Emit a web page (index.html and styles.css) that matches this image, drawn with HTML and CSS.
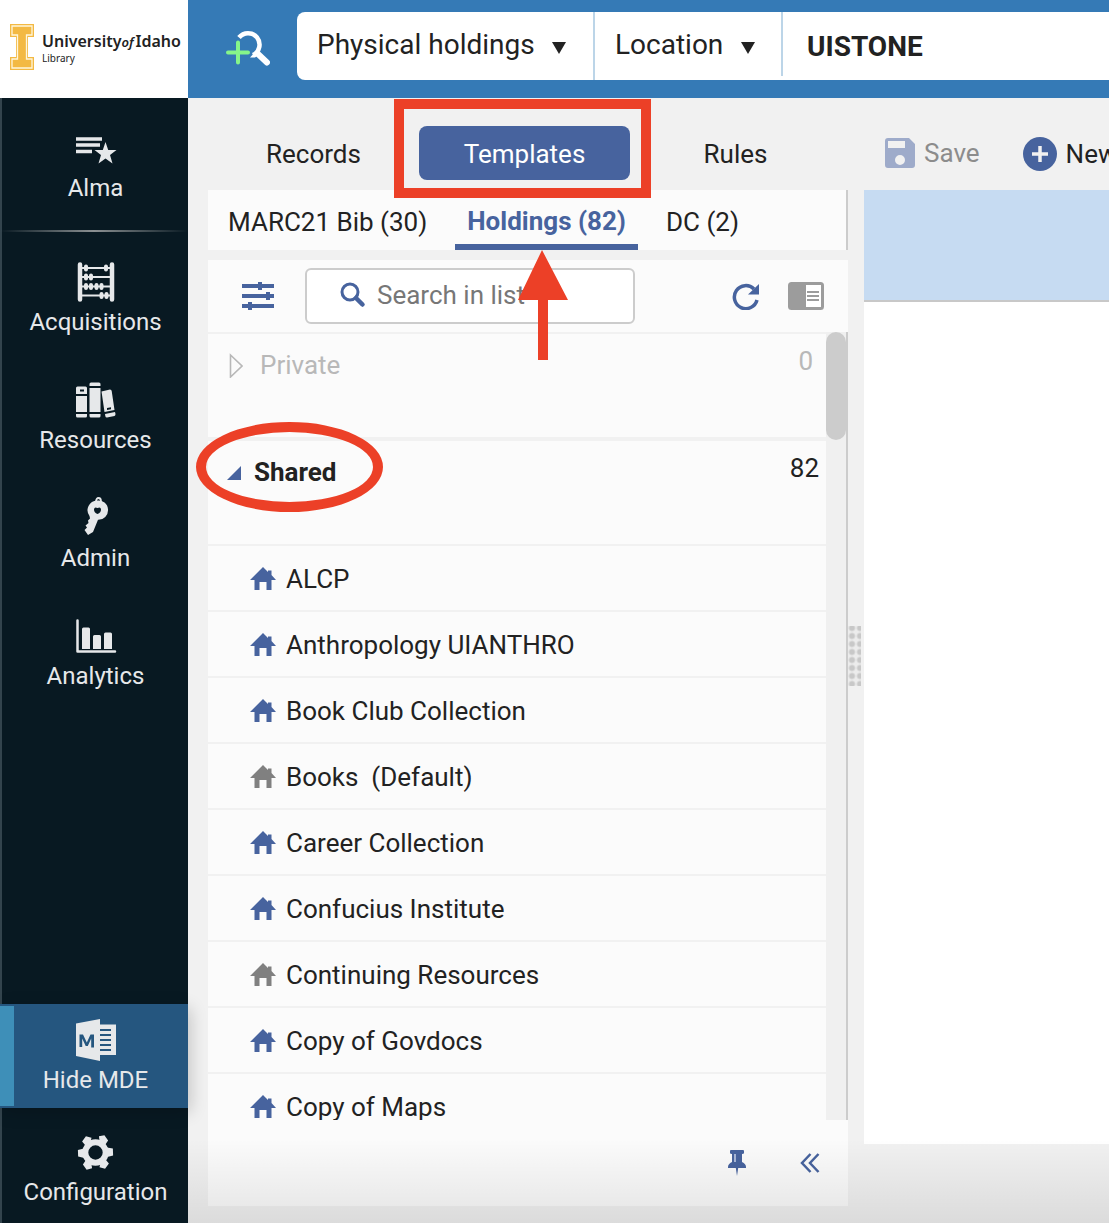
FILE: index.html
```html
<!DOCTYPE html>
<html lang="en">
<head>
<meta charset="utf-8">
<title>Metadata Editor - Templates</title>
<meta name="viewport" content="width=device-width, initial-scale=1">
<link rel="stylesheet" href="styles.css">
</head>
<body>
<svg class="sprite" aria-hidden="true">
  <symbol id="house" viewBox="0 0 26 24">
    <path d="M13 0 18 5V3.500h3.500V8L26 13h-4.500v10h-5v-8h-7v8h-5V13H0z" fill="currentColor"/>
  </symbol>
</svg>
<div class="app">
  <aside class="sidebar">
    <a class="brand" href="#" aria-label="University of Idaho Library">
      <svg width="24" height="46" viewBox="0 0 24 46" aria-hidden="true">
        <path d="M0 0H24V13H18V33H24V46H0V33H6V13H0z" fill="#f3b943"/>
        <path d="M2 2H22V11H16.500V35H22V44H2V35H7.500V11H2z" fill="none" stroke="#fff6dc" stroke-width="1.300"/>
      </svg>
      <span class="brand-text">
        <span class="brand-name">University<i>of</i>Idaho</span>
        <span class="brand-unit">Library</span>
      </span>
    </a>
    <nav class="menu">
      <a class="menu-item" href="#">
        <svg class="menu-icon" viewBox="0 0 40 40"><path d="M0 11H26M0 17H24M0 23.500H16" stroke="currentColor" stroke-width="3.500"/><path d="M29.500 14 32.200 22H40.500L34 27 36.500 35.500 29.500 30.500 22.500 35.500 25 27 18.500 22H26.800z" fill="currentColor"/></svg>
        <span>Alma</span>
      </a>
      <hr class="menu-rule">
      <a class="menu-item" href="#">
        <svg class="menu-icon" viewBox="0 0 40 40"><path d="M4 2.500V37.500M36 2.500V37.500" stroke="currentColor" stroke-width="4.500" stroke-linecap="round"/><path d="M4 6H36M4 15H36M4 24.500H36M4 33.500H36" stroke="currentColor" stroke-width="2.200"/><path d="M10 4.500V7.500M30 4.500V7.500M10 13.500V16.500M15 13.500V16.500M10 23V26M15 23V26M20.500 23V26M25.500 23V26M25.500 32V35M30.500 32V35" stroke="currentColor" stroke-width="4" stroke-linecap="round"/></svg>
        <span>Acquisitions</span>
      </a>
      <a class="menu-item" href="#">
        <svg class="menu-icon" viewBox="0 0 40 40"><path fill="currentColor" fill-rule="evenodd" d="M1.500 6.500h8q1.500 0 1.500 1.500v6H0V8q0-1.500 1.500-1.500zM4 9.500v2h4v-2zM0 16h11v16H0zM0 34h11v2q0 1.500-1.500 1.500h-8Q0 37.500 0 36zM15 2.500h8q1.500 0 1.500 1.500v2h-11V4q0-1.500 1.500-1.500zM13.500 8h11v24h-11zM13.500 34h11v2q0 1.500-1.500 1.500h-8q-1.500 0-1.500-1.500zM25.500 11.500 34 9.500q1.500 0 1.700 1.500L38.500 30 28.500 32zM31 28v2l4-.7v-2zM29 34l10-2 .5 2q0 1.500-1 2l-7.500 1.500q-1.500 0-1.700-1.500z"/></svg>
        <span>Resources</span>
      </a>
      <a class="menu-item" href="#">
        <svg class="menu-icon" viewBox="0 0 40 40"><ellipse cx="22.500" cy="3.500" rx="2.500" ry="3.500" fill="none" stroke="currentColor" stroke-width="1.800"/><path fill="currentColor" fill-rule="evenodd" d="M21 2.500a9.700 9.700 0 1 1 1 19.300L17 34l-5 3-3.500-5 2.500-2.500-1.500-2 3-2.500-.5-2.500 2-2-.5-2.500A9.700 9.700 0 0 1 21 2.500zM21.500 10q-3.300-1.500-3.500 1.500 0 3 3.500 4.500 3.500-1.500 3.500-4.500-.2-3-3.500-1.500z"/></svg>
        <span>Admin</span>
      </a>
      <a class="menu-item" href="#">
        <svg class="menu-icon" viewBox="0 0 40 40"><path d="M1.500 4.500V35.500H39" fill="none" stroke="currentColor" stroke-width="2.500" stroke-linecap="round" stroke-linejoin="round"/><path fill="currentColor" d="M6 13q0-1.500 1.500-1.500h5q1.500 0 1.500 1.500v20H6zM17 20.500q0-1.500 1.500-1.500h5q1.500 0 1.500 1.500V33h-8zM28 18q0-1.500 1.500-1.500h5Q36 16.500 36 18v15h-8z"/></svg>
        <span>Analytics</span>
      </a>
    </nav>
    <nav class="menu-bottom">
      <a class="menu-item menu-item-active" href="#">
        <svg class="menu-icon" viewBox="0 0 40 40"><path fill="currentColor" d="M0 3.500 24-1V41L0 36zM24 4.500h16V35H24z"/><path d="M24 10h11M24 15h11M24 20h11M24 25h11M24 30h11" stroke="#25567f" stroke-width="1.800"/><path fill="#25567f" d="M3.500 14.500H7L10.800 22.500 14.500 14.500H18V27.500H15.200V18.500L11.800 26H9.700L6.200 18.500V27H3.500z"/></svg>
        <span>Hide MDE</span>
      </a>
      <a class="menu-item menu-item-last" href="#">
        <svg class="menu-icon" viewBox="0 0 40 40"><circle cx="19.500" cy="20.500" r="10.200" fill="none" stroke="currentColor" stroke-width="6"/><path fill="currentColor" transform="rotate(-2 19.500 20.500)" d="M24 10 23.500 4.500 29 3.500 32.500 9 29.500 13zM31 16 37 17V24L31 25.500zM29.500 28 32.500 32 28.500 37 23 35.500 24 31zM15 31 15.500 36 10 37.500 6.500 32 9.500 28zM8 25.500 2 24V17.500L8 16zM9.500 13 6.500 9 10.500 4 16 5.500 15 10z"/></svg>
        <span>Configuration</span>
      </a>
    </nav>
  </aside>

  <main class="main">
    <header class="topbar">
      <button class="advanced" type="button" aria-label="Advanced search">
        <svg width="44" height="36" viewBox="0 0 44 36"><path d="M13 7.500A11.500 11.500 0 1 1 27 25" fill="none" stroke="#fff" stroke-width="4.500"/><path d="M24 27.500 31 20 34 24 29 27.500z" fill="#fff"/><path d="M32 24 41 32.500" stroke="#fff" stroke-width="6" stroke-linecap="round"/><path d="M12 12.500V32.500M2 22.500H22" stroke="#86f58a" stroke-width="4" stroke-linecap="round"/></svg>
      </button>
      <form class="search">
        <label class="picker">
          <select aria-label="Search for"><option>Physical holdings</option></select>
          <svg width="14" height="12" viewBox="0 0 14 12"><path d="M0 0H14L7 12z" fill="#222"/></svg>
        </label>
        <label class="picker picker-short">
          <select aria-label="Search in"><option>Location</option></select>
          <svg width="14" height="12" viewBox="0 0 14 12"><path d="M0 0H14L7 12z" fill="#222"/></svg>
        </label>
        <input class="query" type="text" aria-label="Search term" value="UISTONE">
      </form>
    </header>

    <div class="workspace">
      <section class="panel">
        <div class="tabs">
          <button type="button">Records</button>
          <button type="button" class="tab-on">Templates</button>
          <button type="button">Rules</button>
        </div>
        <div class="formats">
          <button type="button">MARC21 Bib (30)</button>
          <button type="button" class="format-on">Holdings (82)</button>
          <button type="button">DC (2)</button>
        </div>
        <div class="browser">
          <div class="tools">
            <button class="icon-button" type="button" aria-label="Filters">
              <svg width="32" height="30" viewBox="0 0 32 30"><path d="M0 5H32M0 15H32M0 25H32" stroke="currentColor" stroke-width="4"/><path d="M18 1V9M26 11V19M8 21V29" stroke="currentColor" stroke-width="4"/></svg>
            </button>
            <label class="filter">
              <svg width="26" height="26" viewBox="0 0 26 26"><circle cx="10" cy="10" r="8" fill="none" stroke="currentColor" stroke-width="3"/><path d="M16 16 22.500 22.500" stroke="currentColor" stroke-width="4.500" stroke-linecap="round"/></svg>
              <input type="search" aria-label="Search in list" placeholder="Search in list">
            </label>
            <button class="icon-button refresh" type="button" aria-label="Refresh">
              <svg width="28" height="28" viewBox="0 0 28 28"><path d="M25 18A11.500 11.500 0 1 1 22 7" fill="none" stroke="currentColor" stroke-width="3.500"/><path d="M27 2V12.500H16z" fill="currentColor"/></svg>
            </button>
            <button class="icon-button split" type="button" aria-label="Split view">
              <svg width="36" height="28" viewBox="0 0 36 28"><rect width="36" height="28" rx="3.500" fill="#9c9c9c"/><path d="M18 3H33V25H18z" fill="#fff"/><path d="M19 10H31M19 14H31M19 18H31" stroke="#9c9c9c" stroke-width="2"/></svg>
            </button>
          </div>
          <div class="listing">
            <div class="tree">
              <div class="group group-empty">
                <button type="button"><svg width="14" height="26" viewBox="0 0 14 26"><path d="M1.500 3 13 14 1.500 25z" fill="none" stroke="currentColor" stroke-width="1.600"/></svg>Private</button>
                <span>0</span>
              </div>
              <div class="group group-open">
                <button type="button"><svg width="14" height="16" viewBox="0 0 14 16"><path d="M14 2V16H0z" fill="#47639e"/></svg>Shared</button>
                <span>82</span>
              </div>
              <ul class="templates">
                <li><svg><use href="#house"/></svg>ALCP</li>
                <li><svg><use href="#house"/></svg>Anthropology UIANTHRO</li>
                <li><svg><use href="#house"/></svg>Book Club Collection</li>
                <li class="builtin"><svg><use href="#house"/></svg>Books&nbsp; (Default)</li>
                <li><svg><use href="#house"/></svg>Career Collection</li>
                <li><svg><use href="#house"/></svg>Confucius Institute</li>
                <li class="builtin"><svg><use href="#house"/></svg>Continuing Resources</li>
                <li><svg><use href="#house"/></svg>Copy of Govdocs</li>
                <li><svg><use href="#house"/></svg>Copy of Maps</li>
              </ul>
            </div>
            <div class="track"><div class="thumb"></div></div>
          </div>
          <footer class="panel-foot">
            <button class="icon-button" type="button" aria-label="Pin panel">
              <svg width="18" height="26" viewBox="0 0 18 26"><path fill="currentColor" d="M3 0H15Q16 0 16 1V3Q16 4 14 4V12Q18 14 18 17V18H10.200L9 26 7.800 18H0V17Q0 14 4 12V4Q2 4 2 3V1Q2 0 3 0z"/><path d="M7 4V12" stroke="#a9b8d8" stroke-width="2"/></svg>
            </button>
            <button class="icon-button" type="button" aria-label="Collapse panel">
              <svg width="20" height="20" viewBox="0 0 20 20"><path d="M10.500 1 2 10 10.500 19M18.500 1 10 10 18.500 19" fill="none" stroke="currentColor" stroke-width="2.500"/></svg>
            </button>
          </footer>
        </div>

        <div class="mark-box"></div>
        <div class="mark-ring"></div>
        <svg class="mark-arrow" width="50" height="110" viewBox="0 0 50 110"><path d="M24 0 50 50H30V110H20V50H0z" fill="#ec4027"/></svg>
      </section>

      <div class="gutter"><div class="grip"></div></div>

      <section class="editor">
        <div class="actions">
          <button type="button" disabled>
            <svg width="30" height="30" viewBox="0 0 30 30"><path fill="#9eabca" fill-rule="evenodd" d="M3 0H24L30 6V27Q30 30 27 30H3Q0 30 0 27V3Q0 0 3 0zM3 3V10H20V3zM15 17a5 5 0 1 0 0 10 5 5 0 0 0 0-10z"/></svg>Save
          </button>
          <button type="button">
            <svg width="34" height="34" viewBox="0 0 34 34"><circle cx="17" cy="17" r="17" fill="#47639e"/><path d="M17 9V25M9 17H25" stroke="#f1f1f1" stroke-width="3.500"/></svg>New
          </button>
        </div>
        <div class="sheet"><div class="sheet-head"></div></div>
      </section>
    </div>
  </main>
</div>
</body>
</html>
```
FILE: styles.css
```css
* { box-sizing: border-box; }

body {
  margin: 0;
  font-family: Roboto, "Liberation Sans", sans-serif;
  font-size: 26px;
  line-height: 32px;
  color: #222;
  background: #f1f1f1;
}

button, input, select {
  margin: 0;
  padding: 0;
  border: 0;
  background: none;
  font: inherit;
  color: inherit;
}

svg { flex: none; display: block; }
.sprite { position: absolute; width: 0; height: 0; }

.app {
  display: grid;
  grid-template-columns: 188px minmax(0, 1fr);
  height: 100vh;
  overflow: hidden;
}

/* Sidebar */
.sidebar {
  position: relative;
  z-index: 1;
  display: flex;
  flex-direction: column;
  background: #081922;
  box-shadow: inset 2px 0 #33444d;
}

.brand {
  display: flex;
  flex: none;
  gap: 8px;
  height: 98px;
  padding: 24px 0 0 10px;
  background: #fff;
  color: #222;
  text-decoration: none;
  white-space: nowrap;
}
.brand-text { display: flex; flex-direction: column; padding-top: 7px; }
.brand-name { font: 600 16px/20px "Noto Sans", sans-serif; }
.brand-name i { margin-right: 2px; font-size: 13px; }
.brand-unit { font: 10px/12px "Noto Sans", sans-serif; }

.menu { flex: 1; padding-top: 11px; }
.menu-item {
  display: flex;
  flex-direction: column;
  align-items: center;
  gap: 4px;
  height: 118px;
  padding: 19px 0 0 3px;
  font-size: 24px;
  color: #e6e8ea;
  text-decoration: none;
}
.menu-icon { width: 40px; height: 40px; overflow: visible; }
.menu-rule {
  height: 2px;
  margin: 3px 0 11px;
  border: 0;
  background: linear-gradient(90deg, transparent, #8b9092, transparent);
}
.menu-item-active {
  height: 104px;
  padding-top: 16px;
  background: linear-gradient(#3e8fb8, #3e8fb8) 0 2px / 14px 100px no-repeat #25567f;
  box-shadow: 2px 4px 16px rgba(0, 0, 0, 0.2);
}
.menu-item-last { height: 115px; padding-top: 24px; }

/* Top search bar */
.main {
  position: relative;
  display: flex;
  flex-direction: column;
  min-width: 0;
  min-height: 0;
}
.main::after {
  content: "";
  position: absolute;
  inset: auto 0 0;
  height: 84px;
  background: linear-gradient(transparent, rgba(0, 0, 0, 0.09));
  pointer-events: none;
}
.topbar {
  display: flex;
  flex: none;
  gap: 26px;
  height: 98px;
  padding: 12px 0 18px 38px;
  background: #357ab6;
}
.advanced { padding-top: 4px; width: 45px; }
.search {
  display: flex;
  flex: 1;
  min-width: 0;
  border-radius: 8px 0 0 8px;
  background: #fff;
  font-size: 28px;
}
.picker {
  display: flex;
  align-items: center;
  gap: 17px;
  padding: 0 27px 2px 20px;
  border-right: 2px solid #bcd5e8;
}
.picker svg { margin-top: 6px; }
.picker-short { height: 64px; padding: 2px 26px 0 20px; }
.picker select { appearance: none; line-height: 36px; }
.query {
  flex: 1;
  min-width: 0;
  padding: 2px 0 0 24px;
  font-size: 28px;
  font-weight: 700;
}

/* Workspace */
.workspace {
  display: flex;
  flex: 1;
  min-height: 0;
  padding-left: 20px;
}
.panel {
  position: relative;
  display: flex;
  flex: none;
  flex-direction: column;
  width: 640px;
  padding-bottom: 17px;
}
.tabs {
  display: grid;
  grid-template-columns: repeat(3, 1fr);
  flex: none;
  height: 92px;
  padding: 28px 7px 10px 0;
}
.tabs button { padding-top: 2px; }
.tab-on {
  border-radius: 8px;
  background: #47639e;
  color: #fff;
}
.formats {
  display: flex;
  flex: none;
  gap: 16px;
  height: 60px;
  margin-bottom: 10px;
  padding-left: 8px;
  border-right: 2px solid #ccc;
  background: #fbfbfb;
}
.formats button { padding: 4px 12px 0; border-bottom: 0 solid #47639e; }
.formats .format-on {
  padding-top: 8px;
  border-bottom-width: 6px;
  font-weight: 700;
  color: #47639e;
}

.browser {
  display: flex;
  flex: 1;
  flex-direction: column;
  min-height: 0;
  background: #fbfbfb;
}
.icon-button { color: #47639e; }
.tools {
  display: flex;
  flex: none;
  align-items: center;
  height: 72px;
  padding: 0 24px 0 34px;
}
.filter {
  display: flex;
  align-items: center;
  gap: 11px;
  width: 330px;
  height: 56px;
  margin-left: 31px;
  padding: 0 0 2px 33px;
  border: 2px solid #ccc;
  border-radius: 6px;
  background: #fff;
  color: #47639e;
}
.filter input { flex: 1; min-width: 0; color: #222; }
.filter input::placeholder { color: #777; opacity: 1; }
.refresh { margin-left: auto; }
.split { margin-left: 28px; }

.listing { display: flex; flex: 1; min-height: 0; }
.tree {
  flex: 1;
  min-width: 0;
  overflow: hidden;
  border-top: 2px solid #f1f1f1;
}
.track {
  flex: none;
  width: 22px;
  border-right: 2px solid #ccc;
  background: #f0f0f0;
}
.thumb { height: 108px; border-radius: 10px; background: #ccc; }

.group {
  display: flex;
  align-items: flex-start;
  justify-content: space-between;
  height: 107px;
  padding: 11px 7px 0 19px;
  border-bottom: 4px solid #f1f1f1;
}
.group button {
  display: flex;
  align-items: center;
  gap: 13px;
  padding-top: 4px;
}
.group-empty { padding: 11px 13px 0 21px; color: #b8b8b8; }
.group-empty button { gap: 17px; }
.group-open { height: 105px; border-bottom-width: 2px; }
.group-open button { font-weight: 700; }

.templates { margin: 0; padding: 0; list-style: none; }
.templates li {
  display: flex;
  align-items: center;
  gap: 10px;
  height: 66px;
  padding: 2px 0 0 42px;
  border-bottom: 2px solid #f1f1f1;
}
.templates svg { width: 26px; height: 24px; color: #47639e; }
.templates .builtin svg { color: #808080; }

.panel-foot {
  display: flex;
  flex: none;
  align-items: center;
  justify-content: flex-end;
  gap: 54px;
  height: 86px;
  padding-right: 28px;
}

/* Tutorial callouts */
.mark-box, .mark-ring, .mark-arrow { position: absolute; pointer-events: none; }
.mark-box {
  top: 1px;
  left: 186px;
  width: 257px;
  height: 99px;
  border: 10px solid #ec4027;
}
.mark-ring {
  top: 324px;
  left: -12px;
  width: 187px;
  height: 90px;
  border: 10px solid #ec4027;
  border-radius: 50%;
}
.mark-arrow { top: 152px; left: 310px; }

/* Editor */
.gutter {
  display: flex;
  flex: none;
  align-items: center;
  width: 16px;
  margin: 92px 0 101px;
}
.grip {
  width: 13px;
  height: 60px;
  background: radial-gradient(circle, #c8c8c8 2px, #ececec 4px) 0 -2px / 8px 8px;
}
.editor {
  display: flex;
  flex: 1;
  flex-direction: column;
  min-width: 0;
  overflow: hidden;
}
.actions {
  display: flex;
  flex: none;
  align-items: center;
  gap: 43px;
  height: 92px;
  padding: 20px 0 0 21px;
}
.actions button {
  display: flex;
  flex: none;
  align-items: center;
  gap: 9px;
}
.actions button:disabled { padding-bottom: 2px; color: #8c8c8c; }
.sheet { flex: 1; margin-bottom: 79px; background: #fff; }
.sheet-head {
  height: 112px;
  border-bottom: 2px solid #c8c8c8;
  background: #c6dbf2;
}
```
